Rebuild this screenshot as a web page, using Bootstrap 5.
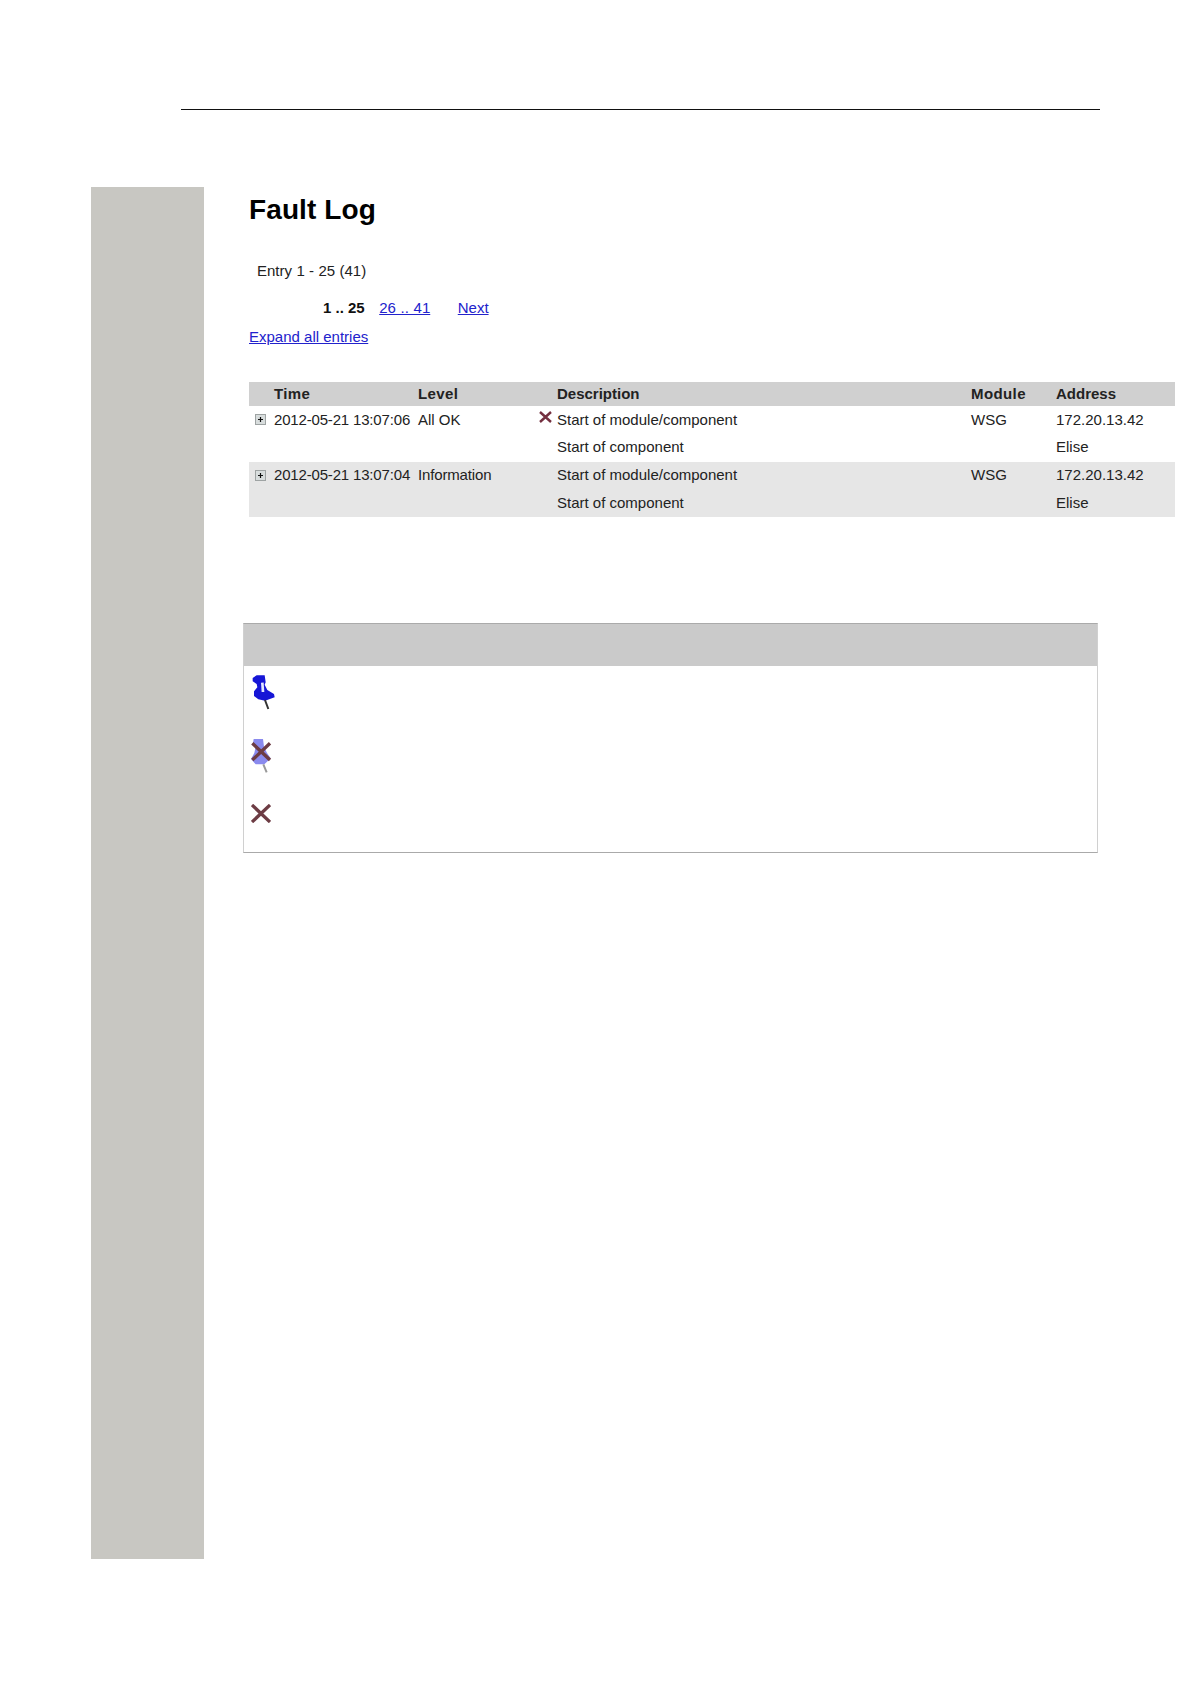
<!doctype html>
<html><head><meta charset="utf-8">
<link href="https://cdn.jsdelivr.net/npm/bootstrap@5.3.0/dist/css/bootstrap.min.css" rel="stylesheet">
<style>
body{background:#fff;font-family:"Liberation Sans",Arial,sans-serif;color:#222;font-size:15px;margin:0;width:1191px;height:1684px;overflow:hidden}
.topline{height:1px;background:#111;margin:109px 0 0 181px;width:919px}
.pagewrap{margin:77px 0 0 91px;height:1372px}
.sidestrip{width:113px;background:#c8c7c2;flex:none}
.maincol{padding-left:45px;width:987px;flex:none}
.pagetitle{font-size:28px;font-weight:700;color:#000;line-height:32px;margin:7px 0 0;letter-spacing:.1px;font-family:"Liberation Sans",sans-serif}
.entrycount{margin:35px 0 0 8px;font-size:15px;line-height:20px;word-spacing:.2px}
.pager{margin:17px 0 0 74px;line-height:20px}
.pager a,.expandlink a{color:#2222cc}
.pager b{font-weight:700;color:#111;margin-right:14.5px}
.pager .ptwo{word-spacing:.5px}
.pager .pnext{margin-left:27.5px}
.expandlink{margin-top:9px;line-height:20px}
.logtbl{margin-top:35px;width:926px;border-collapse:collapse;table-layout:fixed}
.logtbl th,.logtbl td{padding:0;font-size:15px;vertical-align:middle;white-space:nowrap}
.logtbl thead tr{background:#d0d0d0;height:24px}
.logtbl th{font-weight:700;color:#222}
.logtbl tbody tr{height:27.75px}
.logtbl tr.altrow{background:#e6e6e6}
.plusbox{display:block;margin:0 0 0 6px}
.xcell svg{display:block;margin:-6px 0 0 2px}
.tighttime{letter-spacing:-.17px}
.tightlevel{letter-spacing:-.15px}
.widehead{letter-spacing:.4px}
.legendbox{margin:106px 0 0 -6px;width:855px;height:230px;border:1px solid #d0d0d0;border-top-color:#aaa;border-bottom-color:#aaa}
.legendhead{height:42px;background:#cacaca}
.legendicons{padding:8px 0 0 7px;gap:27px}
.legendicons svg{display:block}
</style></head><body>
<div class="topline"></div>
<div class="pagewrap d-flex">
<div class="sidestrip"></div>
<div class="maincol">
<h1 class="pagetitle">Fault Log</h1>
<div class="entrycount">Entry 1 - 25 (41)</div>
<div class="pager"><b>1 .. 25</b><a class="ptwo" href="#">26 .. 41</a><a class="pnext" href="#">Next</a></div>
<div class="expandlink"><a href="#">Expand all entries</a></div>
<table class="logtbl">
<colgroup><col style="width:25px"><col style="width:144px"><col style="width:119px"><col style="width:20px"><col style="width:414px"><col style="width:85px"><col></colgroup>
<thead><tr><th></th><th class="widehead">Time</th><th class="widehead">Level</th><th></th><th>Description</th><th class="widehead">Module</th><th>Address</th></tr></thead>
<tbody>
<tr><td><svg class="plusbox" width="11" height="11" viewBox="0 0 11 11"><rect x=".5" y=".5" width="10" height="10" fill="#d8dddd" stroke="#9ea3a3"/><path d="M3 5.5h5M5.5 3v5" stroke="#111" stroke-width="1.2"/></svg></td><td class="tighttime">2012-05-21 13:07:06</td><td>All OK</td><td class="xcell"><svg width="13" height="12" viewBox="0 0 13 12"><path d="M1 1l11 10M12 1L1 11" stroke="#743040" stroke-width="2.4"/></svg></td><td>Start of module/component</td><td>WSG</td><td>172.20.13.42</td></tr>
<tr><td></td><td></td><td></td><td></td><td>Start of component</td><td></td><td>Elise</td></tr>
<tr class="altrow"><td><svg class="plusbox" width="11" height="11" viewBox="0 0 11 11"><rect x=".5" y=".5" width="10" height="10" fill="#d8dddd" stroke="#9ea3a3"/><path d="M3 5.5h5M5.5 3v5" stroke="#111" stroke-width="1.2"/></svg></td><td class="tighttime">2012-05-21 13:07:04</td><td class="tightlevel">Information</td><td></td><td>Start of module/component</td><td>WSG</td><td>172.20.13.42</td></tr>
<tr class="altrow"><td></td><td></td><td></td><td></td><td>Start of component</td><td></td><td>Elise</td></tr>
</tbody></table>
<div class="legendbox">
<div class="legendhead"></div>
<div class="legendicons d-flex flex-column">
<svg width="24" height="37" viewBox="33 30 72 111"><path d="M50 34H74L77 55 74 62 82 78 102 90 104 100 75 110 55 106 42 96V82L52 70 50 60 38 52V42z" fill="#1616d6"/><path d="M67 56l2 28" stroke="#e4e8ff" stroke-width="8"/><path d="M75 108l10 27" stroke="#333" stroke-width="6"/></svg>
<svg width="22" height="39" viewBox="48 39 66 117"><path d="M56 42H84L87 65 96 84 107 100 88 118H62L48 102 58 84 62 66 54 54z" fill="#8a8aee"/><path d="M85 118l10 24" stroke="#999" stroke-width="6"/><path d="M52 55l53 50M105 55L52 105" stroke="#6d3c44" stroke-width="10"/></svg>
<svg width="20" height="19" viewBox="48 237 60 57"><path d="M51 240l54 51M105 240L51 291" stroke="#6d3c44" stroke-width="10"/></svg>
</div>
</div>
</div>
</div>
<script src="https://cdn.jsdelivr.net/npm/bootstrap@5.3.0/dist/js/bootstrap.bundle.min.js"></script>
</body></html>
